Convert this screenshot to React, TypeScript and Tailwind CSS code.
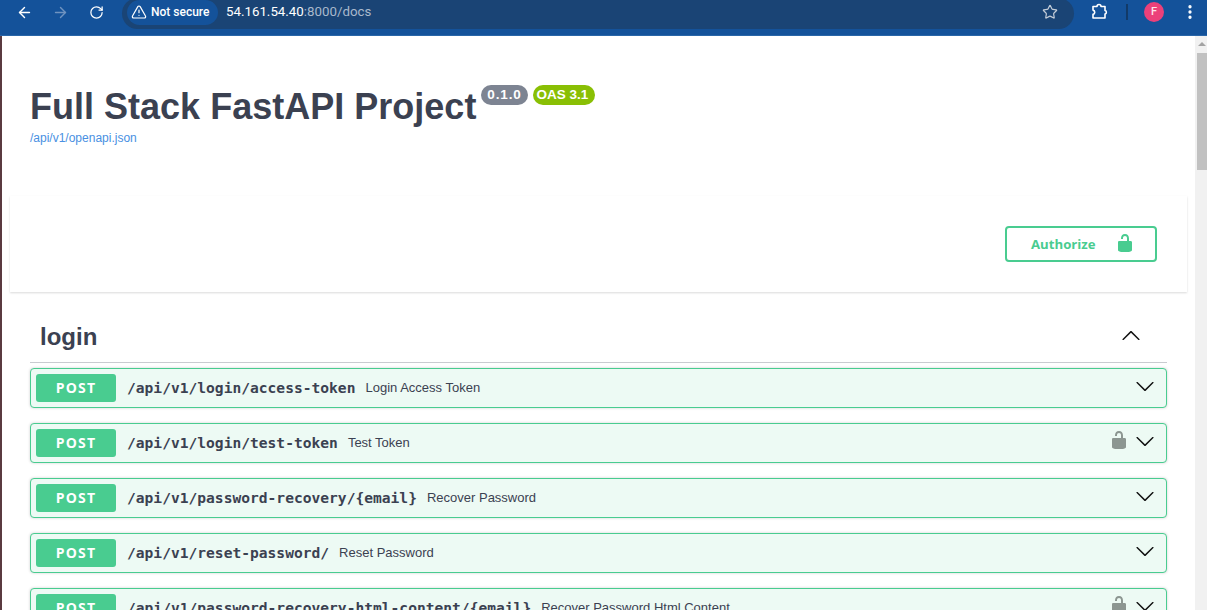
import React from "react";
import { ArrowLeft, ArrowRight, RotateCw, Star, TriangleAlert, EllipsisVertical } from "lucide-react";

const LOCK_OPEN =
  "M15.8 8H14V5.6C14 2.703 12.665 1 10 1 7.334 1 6 2.703 6 5.6V6h2v-.801C8 3.754 8.797 3 10 3c1.203 0 2 .754 2 2.199V8H4c-.553 0-1 .646-1 1.199V17c0 .549.428 1.139.951 1.307l1.197.387C5.672 18.861 6.55 19 7.1 19h5.8c.549 0 1.428-.139 1.951-.307l1.196-.387c.524-.167.953-.757.953-1.306V9.199C17 8.646 16.352 8 15.8 8z";
const CHEVRON =
  "M17.418 6.109c.272-.268.709-.268.979 0s.271.701 0 .969l-7.908 7.83c-.27.268-.707.268-.979 0l-7.908-7.83c-.27-.268-.27-.701 0-.969.271-.268.709-.268.979 0L10 13.25l7.418-7.141z";

const OPS = [
  { path: "/api/v1/login/access-token", summary: "Login Access Token", locked: false },
  { path: "/api/v1/login/test-token", summary: "Test Token", locked: true },
  { path: "/api/v1/password-recovery/{email}", summary: "Recover Password", locked: false },
  { path: "/api/v1/reset-password/", summary: "Reset Password", locked: false },
  { path: "/api/v1/password-recovery-html-content/{email}", summary: "Recover Password Html Content", locked: true },
];

function BrowserBar() {
  return (
    <div className="flex h-[36px] shrink-0 items-start overflow-hidden border-b border-[#2a66a8] bg-[#14529a] text-white">
      <div className="flex h-[24px] items-center pl-[16px]">
        <ArrowLeft size={17} strokeWidth={2} />
        <ArrowRight size={17} strokeWidth={2} className="ml-[19px] text-[#6f93c0]" />
        <RotateCw size={15} strokeWidth={2} className="ml-[20px]" />
      </div>
      <div className="-mt-[2px] ml-[18px] flex h-[31px] w-[952px] items-center rounded-full bg-[#1a4475] pb-[3px] pl-[5px] pr-[16px]">
        <div className="flex h-[25px] w-[91px] items-center rounded-full bg-[#14529a] pl-[4px]">
          <TriangleAlert size={16} strokeWidth={1.8} />
          <span className="ml-[4px] font-['Roboto',sans-serif] text-[12px] font-medium">Not secure</span>
        </div>
        <span className="ml-[8px] font-['Roboto',sans-serif] text-[13.3px] text-white">
          54.161.54.40<span className="text-[#a9b9cc]">:8000/docs</span>
        </span>
        <Star size={16} strokeWidth={1.8} className="ml-auto text-[#c3ccd7]" />
      </div>
      <div className="flex h-[24px] flex-1 items-center">
        <svg width="18" height="18" viewBox="0 0 18 18" fill="none" stroke="white" strokeWidth="1.6" strokeLinejoin="round" className="ml-[17px]">
          <path d="M2 3.5h4a2 2 0 0 1 4 0h4v4a1.8 1.8 0 0 1 0 3.5v4H2v-3.6a2.2 2.2 0 0 0 0-4.3z" />
        </svg>
        <div className="ml-[17px] h-[16px] w-[2px] bg-[#123a68]" />
        <div className="ml-[16px] flex h-[20px] w-[20px] items-center justify-center rounded-full bg-[#ec407a] font-['Roboto',sans-serif] text-[11px] font-medium text-[#fde4ec]">
          F
        </div>
        <EllipsisVertical size={18} strokeWidth={2.4} className="ml-[17px]" />
      </div>
    </div>
  );
}

function OpRow({ path, summary, locked }: { path: string; summary: string; locked: boolean }) {
  return (
    <div className="mb-[15px] flex h-[40px] shrink-0 items-center rounded-[4px] border border-[#49cc90] bg-[#edfaf4] pl-[5px] pr-[11px] shadow-[0_0_3px_rgba(0,0,0,0.19)]">
      <div className="flex h-[28px] w-[80px] items-center justify-center rounded-[3px] bg-[#49cc90] pb-[2px] font-['Open_Sans',sans-serif] text-[14px] font-bold tracking-[1.2px] text-white">
        POST
      </div>
      <span className="ml-[11px] font-['DejaVu_Sans_Mono',monospace] text-[14.6px] font-bold text-[#3b4151]">{path}</span>
      <span className="ml-[10px] font-['Liberation_Sans',sans-serif] text-[13px] text-[#3b4151]">{summary}</span>
      {locked && (
        <svg width="20" height="20" viewBox="0 0 20 20" fill="#8c9691" className="mb-[6px] ml-auto">
          <path d={LOCK_OPEN} />
        </svg>
      )}
      <svg width="20" height="20" viewBox="0 0 20 20" fill="#111" className={locked ? "mb-[5px] ml-[6px]" : "mb-[5px] ml-auto"}>
        <path d={CHEVRON} />
      </svg>
    </div>
  );
}

export default function App() {
  return (
    <div className="flex h-[610px] w-[1207px] flex-col overflow-hidden bg-white font-['Liberation_Sans',sans-serif]">
      <BrowserBar />
      <div className="flex min-h-0 flex-1">
        <div className="w-[2px] shrink-0 bg-[#5a3a40]" />
        <main className="min-w-0 flex-1 overflow-hidden">
          <div className="flex items-start pl-[28px] pt-[50px]">
            <h1 className="w-[447px] whitespace-nowrap text-[36px] font-bold leading-[42px] tracking-[0.01px] text-[#3b4151]">Full Stack FastAPI Project</h1>
            <span className="ml-[4px] mt-[-1px] flex h-[20px] w-[47px] items-center justify-center rounded-[10px] bg-[#7d8492] text-[13.5px] font-bold tracking-[0.9px] text-white">0.1.0</span>
            <span className="ml-[5px] mt-[-1px] flex h-[20px] w-[62px] items-center justify-center rounded-[10px] bg-[#89bf04] pr-[3px] text-[13.5px] font-bold text-white">OAS 3.1</span>
          </div>
          <a className="ml-[28px] mt-[3px] block text-[12px] leading-[14px] text-[#4990e2]">/api/v1/openapi.json</a>
          <section className="ml-[8px] mr-[8px] mt-[51px] flex h-[96px] items-center justify-end bg-white pr-[30px] shadow-[0_1px_2px_rgba(0,0,0,0.15)]">
            <button className="flex h-[36px] w-[152px] items-center rounded-[4px] border-2 border-[#49cc90] pl-[24px] font-['Open_Sans',sans-serif] text-[13.2px] font-bold text-[#49cc90]">
              <span className="mt-[2px]">Authorize</span>
              <svg width="20" height="20" viewBox="0 0 20 20" fill="#49cc90" className="mb-[2px] ml-[19px]">
                <path d={LOCK_OPEN} />
              </svg>
            </button>
          </section>
          <div className="mx-[28px] mt-[24px]">
            <div className="mb-[5px] flex h-[47px] items-center border-b border-[#c9cbd0] pb-[4px] pl-[10px] pr-[26px]">
              <h2 className="text-[24px] font-bold text-[#3b4151]">login</h2>
              <svg width="20" height="20" viewBox="0 0 20 20" fill="#111" className="mb-[3px] ml-auto rotate-180">
                <path d={CHEVRON} />
              </svg>
            </div>
            {OPS.map((op) => (
              <OpRow key={op.path} {...op} />
            ))}
          </div>
        </main>
        <div className="flex w-[12px] shrink-0 flex-col items-end bg-[#f1f1f1]">
          <svg width="10" height="17" viewBox="0 0 10 17" fill="#a3a3a3"><path d="M5 6l4 4H1z" /></svg>
          <div className="h-[117px] w-[10px] bg-[#c1c1c1]" />
        </div>
      </div>
    </div>
  );
}
